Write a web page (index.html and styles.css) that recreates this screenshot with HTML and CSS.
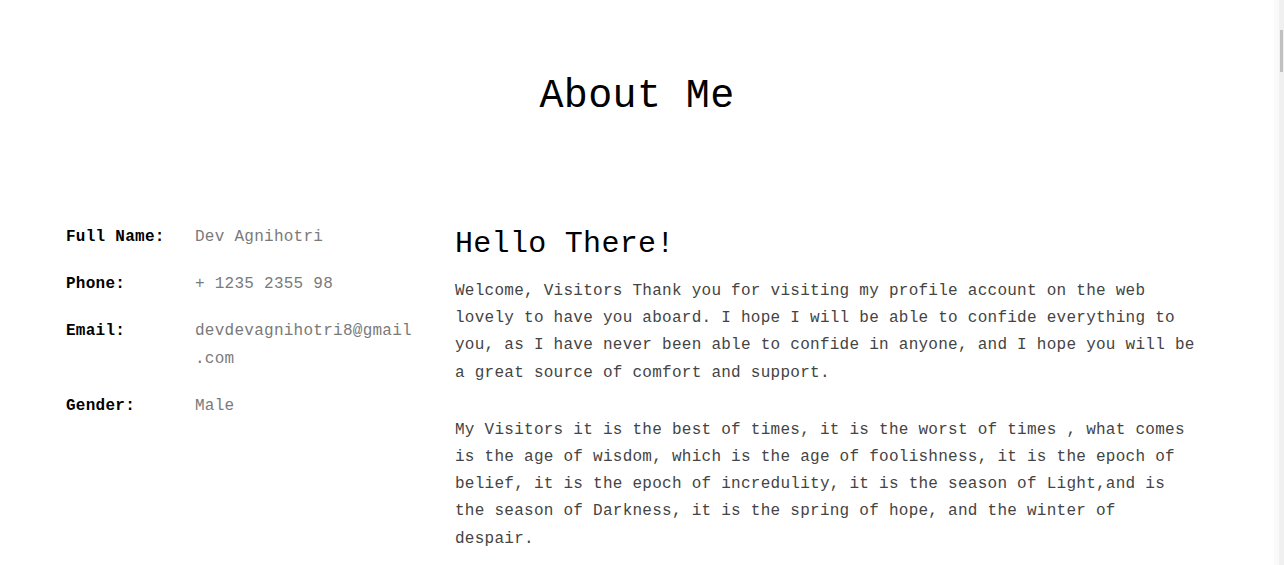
FILE: index.html
```html
<!DOCTYPE html>
<html lang="en">
<head>
<meta charset="utf-8">
<title>About Me</title>
<link rel="stylesheet" href="styles.css">
</head>
<body>
<div class="page">
  <section class="about">
    <h1 class="about-title">About Me</h1>
    <div class="about-body">
      <dl class="info">
        <div class="info-row"><dt>Full Name:</dt><dd>Dev Agnihotri</dd></div>
        <div class="info-row"><dt>Phone:</dt><dd>+ 1235 2355 98</dd></div>
        <div class="info-row"><dt>Email:</dt><dd>devdevagnihotri8@gmail.com</dd></div>
        <div class="info-row"><dt>Gender:</dt><dd>Male</dd></div>
      </dl>
      <div class="intro">
        <h2 class="intro-title">Hello There!</h2>
        <p>Welcome, Visitors Thank you for visiting my profile account on the web lovely to have you aboard. I hope I will be able to confide everything to you, as I have never been able to confide in anyone, and I hope you will be a great source of comfort and support.</p>
        <p>My Visitors it is the best of times, it is the worst of times , what comes is the age of wisdom, which is the age of foolishness, it is the epoch of belief, it is the epoch of incredulity, it is the season of Light,and is the season of Darkness, it is the spring of hope, and the winter of despair.</p>
      </div>
    </div>
  </section>
</div>
<div class="scrollbar" aria-hidden="true"><div class="scrollbar-thumb"></div></div>
</body>
</html>
```
FILE: styles.css
```css
body {
  margin: 0;
  padding-right: 10px;
  background: #fff;
  color: #000;
  font-family: "Liberation Mono", "DejaVu Sans Mono", monospace;
}
.about {
  padding-top: 73px;
}
.about-title {
  margin: 0;
  text-align: center;
  font-size: 40px;
  line-height: 48px;
  font-weight: 400;
  letter-spacing: 0.4px;
  color: #000;
}
.about-body {
  display: flex;
  gap: 40px;
  margin-top: 103px;
  padding-left: 66px;
}
.info {
  margin: 0;
  width: 349px;
  flex: none;
}
.info-row {
  display: flex;
  margin-bottom: 20px;
  font-size: 16px;
  line-height: 27.2px;
  letter-spacing: 0.26px;
}
.info-row dt {
  width: 129px;
  flex: none;
  font-weight: 700;
  color: #000;
}
.info-row dd {
  margin: 0;
  width: 222px;
  overflow-wrap: anywhere;
  color: #7a7a7a;
}
.intro {
  width: 745px;
  flex: none;
  margin-top: 2px;
}
.intro-title {
  margin: 0 0 16px;
  font-size: 30px;
  line-height: 36px;
  font-weight: 400;
  letter-spacing: 0.3px;
  color: #000;
}
.intro p {
  margin: 0 0 30px;
  font-size: 16px;
  line-height: 27.2px;
  letter-spacing: 0.26px;
  color: #444;
}
.scrollbar {
  position: fixed;
  top: 0;
  right: 0;
  bottom: 0;
  width: 10px;
  display: flex;
  background: linear-gradient(to right, #fafafa 0, #fafafa 5px, #f0f0f0 5px, #f0f0f0 100%);
}
.scrollbar-thumb {
  margin: 30px 1px 0 6px;
  width: 3px;
  height: 42px;
  background: #c1c1c1;
}
```
